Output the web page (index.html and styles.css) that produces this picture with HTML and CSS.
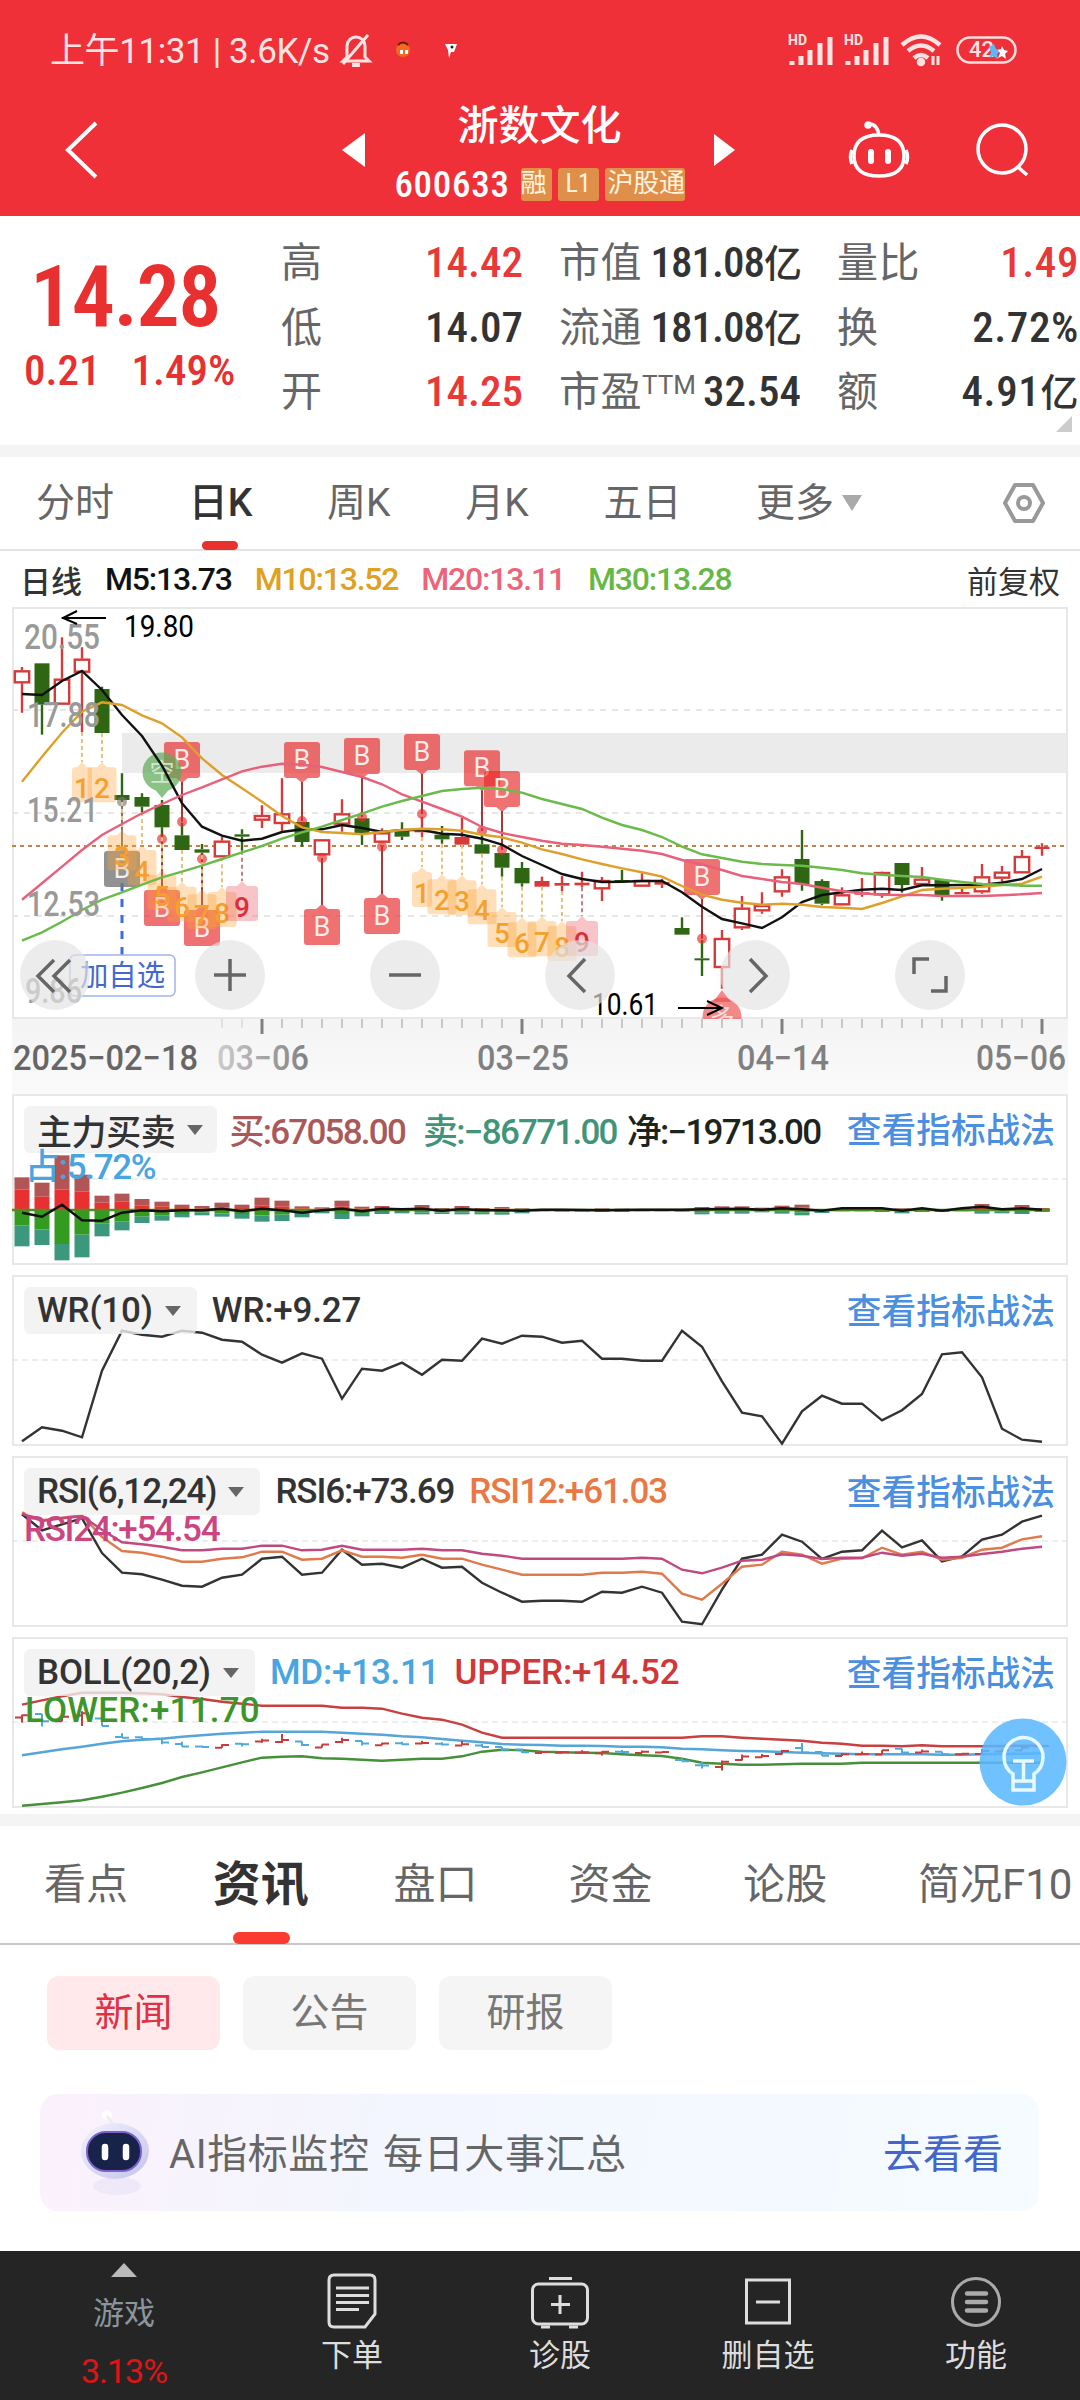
FILE: index.html
```html
<!DOCTYPE html>
<html lang="zh-CN">
<head>
<meta charset="utf-8"/>
<title>浙数文化 600633</title>
<link rel="stylesheet" href="styles.css">
</head>
<body>
<header class="top">
<div class="status">
<span class="status-text">上午11:31 | 3.6K/s</span>
<svg class="bell" width="34" height="36" viewBox="0 0 34 36" fill="none" stroke="#ffe3e3" stroke-width="3"><path d="M8 25V14a9 9 0 0 1 18 0v11l4 4H4z"/><path d="M29 3L4 32"/><path d="M13 33h8" stroke-width="4"/></svg>
<svg class="faces" width="70" height="20" viewBox="0 0 70 20"><circle cx="10" cy="10" r="7" fill="#f26a22"/><path d="M5 5q5-5 10 0" stroke="#6b1a08" stroke-width="2" fill="none"/><path d="M7 12h3M12 12h3" stroke="#fff" stroke-width="4"/><path d="M52 4h12l-3 8h-3l-2 6-1-8z" fill="#fff"/><circle cx="59" cy="7" r="1.5" fill="#222"/></svg>
<div class="status-right">
<svg width="48" height="34" viewBox="0 0 48 34"><text x="0" y="12" class="hd">HD</text><path d="M4 32v-4M13 32v-9M22 32V17M32 32V10M42 32V4" stroke="#ffe3e3" stroke-width="5"/></svg>
<svg width="48" height="34" viewBox="0 0 48 34"><text x="0" y="12" class="hd">HD</text><path d="M4 32v-4M13 32v-9M22 32V17M32 32V10M42 32V4" stroke="#ffe3e3" stroke-width="5"/></svg>
<svg width="44" height="34" viewBox="0 0 44 34" fill="none" stroke="#ffe3e3" stroke-width="4.5"><path d="M2 12q19-17 38 0M8 18q13-11 26 0M14 25q7-6 14 0"/><circle cx="21" cy="29" r="2"/><path d="M33 23v9M38 23v9" stroke-width="3"/></svg>
<svg class="battery" width="62" height="30" viewBox="0 0 62 30"><rect x="1.5" y="2.5" width="58" height="25" rx="12.500" fill="none" stroke="#ffdede" stroke-width="2.500"/><text x="13" y="22">42</text><path d="M38 9l2 5 5 1-4 4 1 5-5-3-4 2 2-6-2-5z" fill="#5bb8ff"/><path d="M46 11l2 4 4 1-3 3 1 5-4-3-4 2 2-5-2-3 3-1z" fill="#fff"/></svg>
</div>
</div>
<nav class="nav">
<svg class="back" width="40" height="60" viewBox="0 0 40 60" fill="none" stroke="#fff" stroke-width="4"><path d="M34 3L6 30l28 27"/></svg>
<svg class="prev" width="24" height="36" viewBox="0 0 24 36"><path d="M23 1v34L0 18z" fill="#fff"/></svg>
<div class="stock">
<div class="stock-name">浙数文化</div>
<div class="stock-sub"><span class="stock-code">600633</span><div class="tags"><span>融</span><span>L1</span><span>沪股通</span></div></div>
</div>
<svg class="next" width="24" height="36" viewBox="0 0 24 36"><path d="M1 2v32l21-16z" fill="#fff"/></svg>
<svg class="robot" width="64" height="58" viewBox="0 0 64 58" fill="none" stroke="#fff" stroke-width="3.500"><path d="M20 3q9-1 11 11"/><circle cx="20" cy="4" r="2" fill="#fff"/><path d="M31 14c17 0 25 7 25 21S47 55 31 55 6 49 6 35s8-21 25-21z"/><path d="M4 29q-3 7 0 14M58 29q3 7 0 14"/><path d="M23 31v9M40 31v9" stroke-width="6" stroke-linecap="round"/></svg>
<svg class="search" width="56" height="56" viewBox="0 0 56 56" fill="none" stroke="#fff" stroke-width="3.500"><circle cx="28" cy="27" r="24"/><path d="M44 45l9 8"/></svg>
</nav>
</header>

<section class="quote">
<div class="price">
<div class="price-now">14.28</div>
<div class="price-diff"><span>0.21</span><span>1.49%</span></div>
</div>
<div class="col col-a">
<p><label>高</label><b class="up">14.42</b></p>
<p><label>低</label><b>14.07</b></p>
<p><label>开</label><b class="up">14.25</b></p>
</div>
<div class="col col-b">
<p><label>市值</label><b>181.08<small>亿</small></b></p>
<p><label>流通</label><b>181.08<small>亿</small></b></p>
<p><label>市盈<sup>TTM</sup></label><b>32.54</b></p>
</div>
<div class="col col-c">
<p><label>量比</label><b class="up">1.49</b></p>
<p><label>换</label><b>2.72%</b></p>
<p><label>额</label><b>4.91<small>亿</small></b></p>
</div>
<i class="corner"></i>
</section>

<nav class="periods">
<span>分时</span><span class="on">日K</span><span>周K</span><span>月K</span><span>五日</span><span>更多<i class="caret"></i></span>
<svg width="44" height="44" viewBox="0 0 44 44" fill="none" stroke="#999" stroke-width="4"><path d="M13 4h18l10 18-10 18H13L3 22z" stroke-linejoin="round"/><circle cx="22" cy="22" r="6"/></svg>
</nav>

<div class="ma">
<span class="ma-k">日线</span><span class="m5">M5:13.73</span><span class="m10">M10:13.52</span><span class="m20">M20:13.11</span><span class="m30">M30:13.28</span><span class="ma-r">前复权</span>
</div>

<div class="kchart">
<svg id="kline" width="1056" height="412" viewBox="12 7 1056 412"></svg>
<div class="tools">
<button><svg viewBox="0 0 70 70"><path d="M34 20L18 36l16 16M50 20L34 36l16 16"/></svg></button>
<button><svg viewBox="0 0 70 70"><path d="M19 35h32M35 19v32"/></svg></button>
<button><svg viewBox="0 0 70 70"><path d="M19 35h32"/></svg></button>
<button><svg viewBox="0 0 70 70"><path d="M40 19L24 36l16 16"/></svg></button>
<button><svg viewBox="0 0 70 70"><path d="M30 19l16 17-16 16"/></svg></button>
<button><svg viewBox="0 0 70 70"><path d="M19 34V19h15M51 36v15H36"/></svg></button>
</div>
</div>
<svg id="axis" class="axis" width="1056" height="75" viewBox="12 1019 1056 75"></svg>

<div class="panel">
<svg id="force" class="plot" width="1056" height="171" viewBox="12 0 1056 171"></svg>
<div class="legend force-legend"><button>主力买卖<i></i></button><span class="buy">买:67058.00</span><span class="sell">卖:−86771.00</span><span class="net">净:−19713.00</span><a>查看指标战法</a></div>
<div class="legend2 zhan">占:5.72%</div>
</div>
<div class="panel">
<svg id="wr" class="plot" width="1056" height="171" viewBox="12 0 1056 171"></svg>
<div class="legend"><button>WR(10)<i></i></button><span>WR:+9.27</span><a>查看指标战法</a></div>
</div>
<div class="panel">
<svg id="rsi" class="plot" width="1056" height="171" viewBox="12 0 1056 171"></svg>
<div class="legend rsi-legend"><button>RSI(6,12,24)<i></i></button><span>RSI6:+73.69</span><span class="rsi12">RSI12:+61.03</span><a>查看指标战法</a></div>
<div class="legend2 rsi24">RSI24:+54.54</div>
</div>
<div class="panel">
<svg id="boll" class="plot" width="1056" height="171" viewBox="12 0 1056 171"></svg>
<div class="legend"><button>BOLL(20,2)<i></i></button><span class="md">MD:+13.11</span><span class="upper">UPPER:+14.52</span><a>查看指标战法</a></div>
<div class="legend2 lower">LOWER:+11.70</div>
<svg class="bulb" width="88" height="88" viewBox="0 0 88 88" fill="none" stroke="#e8f8ff" stroke-width="3.500"><circle cx="44" cy="44" r="43.500" fill="#5ab8ff" fill-opacity=".87" stroke="none"/><path d="M34 72V56q-9-6-9-17a19.500 19.500 0 0 1 39 0q0 11-9 17v16zM34 63h21M44.500 62V43M34 43h21"/></svg>
</div>

<nav class="tabs">
<span>看点</span><span class="on">资讯</span><span>盘口</span><span>资金</span><span>论股</span><span>简况F10</span>
</nav>
<div class="pills"><span class="on">新闻</span><span>公告</span><span>研报</span></div>
<div class="banner">
<svg width="72" height="90" viewBox="0 0 72 90"><defs><linearGradient id="g" x1="0" y1="0" x2="1" y2="1"><stop offset="0" stop-color="#f3f3ff"/><stop offset="1" stop-color="#c3c3ea"/></linearGradient></defs><ellipse cx="38" cy="78" rx="24" ry="9" fill="#d9d6ee" opacity=".35"/><circle cx="28" cy="7" r="5" fill="#fff"/><path d="M28 8l6 8" stroke="#eee" stroke-width="3"/><ellipse cx="36" cy="43" rx="34" ry="28" fill="url(#g)"/><rect x="8" y="24" width="54" height="39" rx="19" fill="#18234a" stroke="#7d5fd0" stroke-width="2"/><path d="M26 39v10M47 39v10" stroke="#fff" stroke-width="6.500" stroke-linecap="round"/></svg>
<span>AI指标监控 每日大事汇总</span><a>去看看</a>
</div>

<footer class="bar">
<div class="game"><i></i><span>游戏</span><em>3.13%</em></div>
<div><svg width="60" height="60" viewBox="0 0 60 60"><path d="M12 4h36q5 0 5 5v34L43 56H12q-5 0-5-5V9q0-5 5-5zM14 17h33M14 24.500h33M14 31.500h33M14 38.500h23"/></svg><span>下单</span></div>
<div><svg width="60" height="60" viewBox="0 0 60 60"><rect x="2.500" y="13" width="55" height="40" rx="6"/><path d="M19 7.500h23M30 24v19M21 33.500h19M11 56h9M39 56h9"/></svg><span>诊股</span></div>
<div><svg width="60" height="60" viewBox="0 0 60 60"><path d="M8.500 9h43v43h-43zM18 31h24"/></svg><span>删自选</span></div>
<div><svg width="60" height="60" viewBox="0 0 60 60" class="dim"><circle cx="30" cy="31" r="23.500"/><path d="M21 22.500h19M21 31h19M21 39.500h19" stroke-width="4.500" stroke-linecap="round"/></svg><span>功能</span></div>
</footer>
<script src="script.js"></script>
</body>
</html>
```
FILE: styles.css
```css
* { box-sizing: border-box; }
body {
    margin: 0;
    width: 1080px;
    height: 2400px;
    overflow: hidden;
    background: #fff;
    color: #333;
    font-family: "Roboto", "Noto Sans CJK SC", sans-serif;
    font-stretch: 85%;
    display: flex;
    flex-direction: column;
}
body > * { flex: none; }
p { margin: 0; }
i, em { font-style: normal; }
svg { display: block; flex: none; }
span, a, button, label, b { white-space: nowrap; }

/* header */
.top { height: 216px; background: #f03038; color: #fff; }
.status { height: 84px; padding: 16px 62px 0 50px; display: flex; align-items: center; }
.status-text { font-size: 35px; color: #ffe3e3; width: 289px; font-stretch: 100%; letter-spacing: -.4px; margin-top: -5px; }
.faces { margin-left: 20px; }
.status-right { margin-left: auto; display: flex; align-items: center; gap: 8px; }
.hd { font: 700 14px "Roboto", sans-serif; fill: #ffe3e3; }
.battery { margin-left: 4px; }
.battery text { font: 500 22px "Roboto", sans-serif; fill: #ffe3e3; }
.nav { height: 132px; display: flex; align-items: center; padding-left: 62px; }
.prev { margin-left: 240px; }
.stock { width: 347px; display: flex; flex-direction: column; align-items: center; }
.stock-name { font-size: 41px; font-weight: 500; line-height: 50px; margin-top: 2px; }
.stock-sub { display: flex; align-items: center; gap: 11px; margin-top: 16px; height: 34px; }
.stock-code { font-size: 37px; font-weight: 500; letter-spacing: .7px; }
.tags { display: flex; gap: 6px; width: 164px; height: 33px; overflow: hidden; }
.tags span { background: #e08f4a; color: #fff3dc; font-size: 26px; line-height: 31px; padding: 0 8px; border-radius: 3px; }
.tags span:first-child { padding: 0 5px 0 0; }
.tags span:last-child { padding: 0; flex: 1; text-align: right; letter-spacing: -.3px; }
.robot { margin-left: 111px; }
.search { margin-left: 62px; }

/* quote */
.quote { position: relative; height: 241px; display: flex; border-bottom: 12px solid #f4f4f4; padding-top: 14px; }
.price { width: 281px; padding-left: 24px; color: #e83030; }
.price-now { font-size: 86px; font-weight: 600; letter-spacing: -1.5px; line-height: 104px; margin: 15px 0 -2px 6px; }
.price-diff { display: flex; gap: 31px; font-size: 43px; font-weight: 500; letter-spacing: 0; line-height: 46px; }
.col p { display: flex; justify-content: space-between; height: 64.5px; line-height: 65px; }
.col label { font-size: 41px; color: #666; margin-top: 1px; letter-spacing: .5px; }
.col b { font-size: 43px; font-weight: 500; }
.col b.up { color: #e83838; }
.col small { font-size: 38px; }
.col-a { width: 242px; }
.col-b { width: 242px; margin-left: 36px; }
.col-b b { letter-spacing: -1px; }
.col-b p:last-child b { letter-spacing: 0; }
.col-c { width: 242px; margin-left: 36px; }
.col-c b { letter-spacing: .6px; }
sup { font-size: 26px; vertical-align: 12px; line-height: 0; font-stretch: 100%; letter-spacing: 0; }
.corner { position: absolute; right: 8px; bottom: 13px; border-left: 16px solid transparent; border-bottom: 16px solid #ccc; }

/* period tabs */
.periods { height: 94px; border-bottom: 2px solid #e3e3e3; display: flex; align-items: center; padding: 0 34px 0 36px; font-size: 39px; font-stretch: 100%; color: #666; }
.periods span { position: relative; margin-right: 74.7px; line-height: 94px; }
.periods .on { color: #333; font-weight: 500; }
.periods .on::after { content: ""; position: absolute; left: 13px; bottom: 0; width: 36px; height: 9px; border-radius: 5px; background: #e8302f; }
.periods svg { margin-left: auto; }
.caret { display: inline-block; border: 10px solid transparent; border-top: 16px solid #aaa; border-bottom: 0; margin: 0 0 5px 8px; }
.ma { height: 56px; display: flex; align-items: center; padding: 0 20px; font-size: 32px; font-weight: 500; font-stretch: 100%; letter-spacing: -1.2px; gap: 23px; }
.ma-k { font-size: 31px; letter-spacing: 0; }
.m5 { color: #111; }
.m10 { color: #e0a020; }
.m20 { color: #ee6378; }
.m30 { color: #66b845; }
.ma-r { margin-left: auto; font-size: 31px; font-weight: 400; letter-spacing: 0; }

/* main chart */
.kchart { position: relative; width: 1056px; height: 412px; margin-left: 12px; }
.tools { position: absolute; left: 8px; top: 333px; display: flex; gap: 105px; }
.tools button { width: 70px; height: 70px; padding: 0; border: 0; border-radius: 35px; background: rgba(227, 227, 227, .68); }
.tools svg { fill: none; stroke: #666; stroke-width: 3.5; }
.axis { margin-left: 12px; background: linear-gradient(to bottom, #f4f4f4, #fafafa); }
text { font-family: "Roboto", "Noto Sans CJK SC", sans-serif; font-stretch: 100%; }

/* indicator panels */
.panel { position: relative; width: 1056px; height: 171px; margin: 0 0 10px 12px; }
.plot { position: absolute; left: 0; top: 0; }
.legend { position: relative; display: flex; align-items: center; padding: 12px 13px 0 12px; height: 59px; font-size: 35px; font-stretch: 100%; font-weight: 500; letter-spacing: -.2px; gap: 15px; }
.force-legend { gap: 12px; letter-spacing: -1.75px; }
.rsi-legend { letter-spacing: -1.1px; }
.legend button { border: 0; border-radius: 6px; background: rgba(240, 240, 240, .8); height: 47px; padding: 0 16px 0 13px; font: inherit; font-stretch: inherit; letter-spacing: inherit; color: #333; display: flex; align-items: center; }
.force-legend button { letter-spacing: -.4px; padding-right: 14px; }
.force-legend span { margin-top: -3px; }
.legend button i { border: 8px solid transparent; border-top: 10px solid #666; border-bottom: 0; margin-left: 12px; }
.legend a { margin: -4px 0 0 auto; color: #4a8fe0; font-size: 34.7px; letter-spacing: 0; }
.legend2 { position: relative; font-size: 35px; font-stretch: 100%; font-weight: 500; line-height: 30px; margin: 0 0 0 13px; }
.buy { color: #a85a5a; }
.sell { color: #419478; margin-left: 6px; }
.net { color: #1c241c; margin-left: -2px; }
.zhan { color: #48a5e0; letter-spacing: -1.3px; }
.rsi12 { color: #ea7845; }
.rsi24 { color: #cc4580; letter-spacing: -1.3px; margin-left: 12px; }
.md { color: #48a5e0; }
.upper { color: #d03838; }
.lower { color: #3c952a; letter-spacing: .2px; }
.bulb { position: absolute; left: 967px; top: 81px; }

/* info tabs */
.tabs { height: 131px; margin-top: -4px; border-top: 12px solid #f4f4f4; border-bottom: 2px solid #c8c8c8; display: flex; align-items: center; padding: 0 0 0 44px; font-size: 42px; font-stretch: 100%; color: #666; }
.tabs span { position: relative; width: 174.8px; flex: none; line-height: 118px; }
.tabs .on { left: -6px; color: #333; font-size: 48px; font-weight: 700; }
.tabs .on::after { content: ""; position: absolute; left: 20px; bottom: 0; width: 57px; height: 12px; border-radius: 6px; background: #fb3b30; }
.pills { display: flex; gap: 23px; padding: 31px 47px 44px; }
.pills span { width: 173px; height: 74px; border-radius: 12px; background: #f5f5f5; color: #777; font-size: 39px; line-height: 74px; text-align: center; }
.pills .on { background: #ffe9ea; color: #e03045; }
.banner { height: 117px; margin: 0 41px 40px 40px; border-radius: 18px; background: linear-gradient(100deg, #fbf1fd, #f3f6fe 35%, #f4f8ff 70%, #f5fcff); display: flex; align-items: center; padding: 0 36px 0 39px; font-size: 40px; color: #666; }
.banner span { margin: -4px 0 0 18px; letter-spacing: .6px; word-spacing: 3px; font-stretch: 100%; }
.banner a { margin: -4px 0 0 auto; color: #4466cc; }

/* bottom bar */
.bar { height: 149px; background: #252525; display: flex; color: #ddd; font-size: 31px; }
.bar div { width: 208px; display: flex; flex-direction: column; align-items: center; padding-top: 20px; line-height: 46px; }
.bar svg { fill: none; stroke: #ddd; stroke-width: 3; margin-bottom: 2px; }
.bar svg.dim { stroke: #aaa; }
.bar .game { width: 248px; padding-top: 12px; color: #8b959c; }
.game i { border: 13px solid transparent; border-bottom: 14px solid #bbb; border-top: 0; margin-bottom: 14px; }
.game em { color: #e01414; margin-top: 11px; font-size: 34px; font-stretch: 100%; letter-spacing: -1px; }
```
FILE: script.js
```js
// candle: [high, body top, body bottom, low, type]  r = hollow, R = solid red, g = green
const candles = [
    [201,211,250,338,'r'],[190,190,314,404,'g'],[112,236,314,314,'r'],[142,176,218,396,'r'],[260,267,399,399,'g'],
    [520,585,600,606,'g'],[580,591,620,636,'g'],[600,615,682,712,'g'],[668,706,750,750,'g'],[732,748,758,766,'g'],
    [710,722,772,772,'r'],[688,703,710,752,'g'],[616,645,662,684,'r'],[535,640,672,692,'r'],[666,666,726,740,'g'],
    [718,718,766,766,'r'],[598,640,674,695,'r'],[655,655,700,735,'g'],[685,697,728,728,'r'],[667,693,710,720,'g'],
    [650,689,697,711,'R'],[678,704,718,731,'g'],[653,711,734,734,'R'],[705,733,761,761,'g'],[759,759,803,830,'g'],
    [786,804,850,860,'g'],[830,843,860,860,'R'],[828,849,857,873,'R'],[815,848,856,862,'R'],[831,840,868,903,'r'],
    [810,840,846,846,'g'],[820,840,860,860,'r'],[836,846,854,864,'R'],[952,984,1004,1004,'g'],[1020,1075,1080,1128,'g'],
    [990,1014,1104,1166,'r'],[888,923,985,990,'r'],[877,915,934,941,'r'],[808,829,877,890,'r'],[690,777,852,872,'g'],
    [838,843,911,916,'g'],[862,883,916,916,'r'],[834,877,884,890,'R'],[815,816,886,893,'r'],[789,789,855,878,'g'],
    [801,836,855,855,'r'],[840,840,885,902,'g'],[862,876,883,883,'R'],[792,829,877,881,'r'],[798,815,836,846,'r'],
    [750,768,820,820,'r'],[730,740,747,767,'R']
];
const ma = {
    '#111': [282,285,243,213,270,345,408,497,610,680,707,722,716,696,688,688,675,684,696,690,690,701,704,716,734,768,795,822,837,846,845,843,843,877,920,957,970,984,952,906,885,877,869,866,870,856,856,855,854,848,837,807],
    '#dfa02a': [545,470,398,335,307,315,346,370,412,475,525,565,605,648,682,696,699,703,696,690,686,688,692,704,712,728,748,762,778,792,805,817,830,858,884,899,908,914,911,914,921,923,927,909,889,870,866,863,860,855,851,830],
    '#e8607a': [899,850,800,750,705,672,640,612,585,562,538,514,500,491,494,501,516,531,553,583,605,627,650,681,699,711,722,731,735,740,746,752,762,780,793,810,828,837,846,852,863,874,880,884,885,885,888,888,888,886,883,879],
    '#6bbb4a': [1022,997,965,930,899,877,854,832,815,797,777,757,738,716,697,680,660,641,620,603,588,573,567,563,567,578,597,612,627,653,675,690,711,740,763,774,785,792,795,797,803,810,820,824,828,831,839,846,852,854,857,857]
};
const X = i => 22 + 20 * i;

function line(data, color, top, w = 2.4) {
    const pts = data.map((v, i) => X(i) + ',' + ((v - top) / 3).toFixed(1)).join(' ');
    return `<polyline points="${pts}" fill="none" stroke="${color}" stroke-width="${w}"/>`;
}
function label(s, x, y, len, size, color, weight = 400) {
    return `<text x="${x}" y="${y}" textLength="${len}" lengthAdjust="spacingAndGlyphs" font-size="${size}" font-weight="${weight}" fill="${color}">${s}</text>`;
}

function drawKline() {
    let s = '<rect x="122" y="133" width="946" height="40" fill="#ebebeb"/>';
    s += '<rect x="13" y="8" width="1054" height="410" fill="none" stroke="#e8e8e8" stroke-width="2"/>';
    [110, 213, 316].forEach(y => s += `<path d="M12 ${y}H1066" stroke="#e6e6e6" stroke-width="2" stroke-dasharray="6 6"/>`);
    s += '<path d="M12 246H1066" stroke="#c08448" stroke-width="2" stroke-dasharray="4 4"/>';

    // 加自选
    s += '<path d="M122 283V356" stroke="#3f6be0" stroke-width="3" stroke-dasharray="8 8"/>';
    s += '<rect x="70" y="355" width="105" height="41" rx="5" fill="#fff" stroke="#9fb4ea" stroke-width="1.5"/>';
    s += label('加自选', 80, 386, 85, 29, '#4468d0');

    candles.forEach((c, i) => {
        const [h, t, b, l] = c.slice(0, 4).map(v => v / 3), x = X(i);
        const color = c[4] === 'g' ? '#2f6613' : '#d63a3a';
        s += `<path d="M${x} ${h}V${t}M${x} ${b}V${l}" stroke="${color}" stroke-width="2.4"/>`;
        if (c[4] === 'r') s += `<rect x="${x - 7.2}" y="${t + 1}" width="14.4" height="${Math.max(b - t - 2, 2)}" fill="#fff" stroke="${color}" stroke-width="2.4"/>`;
        else s += `<rect x="${x - 7.5}" y="${t}" width="15" height="${Math.max(b - t, 2)}" fill="${color}"/>`;
    });

    // B markers: [index, box top, dot, grey]
    [[8,426,665],[14,426,663],[17,414,651],[20,402,642],[23,451,693],[24,513,750],[34,777,1016],
     [5,753,605,1],[7,870,717],[9,930,777],[15,927,774],[18,894,740]].forEach(([i, top, dot, grey]) => {
        const x = X(i), y = top / 3, d = dot / 3, down = dot > top;
        const c = grey ? '#777' : '#e62828';
        const tip = down ? `M${x - 6} ${y + 36}h12l-6 5z` : `M${x - 6} ${y}h12l-6 -5z`;
        s += `<path d="M${x} ${d}V${down ? y + 40 : y - 4}" stroke="${grey ? '#777' : '#a83838'}" stroke-width="2"/>`;
        s += `<g fill="${c}" fill-opacity=".64"><circle cx="${x}" cy="${d}" r="5"/><path d="${tip}"/><rect x="${x - 18}" y="${y}" width="36" height="36" rx="3" fill-opacity="${grey ? .8 : .66}"/></g>`;
        s += `<text x="${x}" y="${y + 27}" text-anchor="middle" font-size="27" fill="#fff" fill-opacity=".88">B</text>`;
    });

    s += '<g fill="#5fab57" opacity=".72"><circle cx="162" cy="172" r="19.5"/><path d="M153 187h18l-9 11z"/></g><text x="162" y="181" text-anchor="middle" font-size="25" fill="#dff0dc" fill-opacity=".85">空</text>';
    s += '<g fill="#ee4a4a" fill-opacity=".65"><circle cx="722" cy="417" r="19.5"/><path d="M713 402h18l-9 -12z"/></g><text x="722" y="426" text-anchor="middle" font-size="25" fill="#fff" fill-opacity=".7">多</text>';

    // nine-turn counters
    [[3,1,502],[4,2,502],[5,3,706],[6,4,750],[7,5,825],[8,6,860],[9,7,883],[10,8,876],[11,9,858],
     [20,1,816],[21,2,838],[22,3,841],[23,4,868],[24,5,936],[25,6,967],[26,7,964],[27,8,978],[28,9,963]].forEach(([i, n, top]) => {
        const x = X(i), y = top / 3, w = n === 1 ? 20 : n === 9 ? 32 : 29, c = n === 9 ? '#ea5560' : '#fba43a';
        s += `<path d="M${x} ${candles[i][3] / 3}V${y - 5}" stroke="${n === 9 ? '#c88080' : '#e8c27c'}" stroke-width="2" stroke-dasharray="4 3"/>`;
        s += `<path d="M${x - w / 2 + 3} ${y}h${w / 2 - 8}l5 -5l5 5h${w / 2 - 8}q3 0 3 3v29q0 3 -3 3h${6 - w}q-3 0 -3 -3v-29q0 -3 3 -3z" fill="${c}" fill-opacity=".35"/>`;
        s += `<text x="${x}" y="${y + 30.5}" text-anchor="middle" font-size="28" font-weight="500" fill="${n === 9 ? '#d8303a' : '#f5a02a'}">${n}</text>`;
    });

    for (const color in ma) s += line(ma[color], color, 0);

    [['20.55', 24, 49, 76], ['17.88', 27, 127, 73], ['15.21', 27, 222, 71], ['12.53', 27, 316, 73], ['9.86', 25, 403, 57]]
        .forEach(([t, x, y, w]) => s += label(t, x, y, w, 35, '#999', 500));
    s += label('19.80', 124, 37, 70, 31, '#000') + label('10.61', 592, 415, 66, 31, '#000');
    s += '<path d="M106 18H62M77 11L63 18l14 6M678 408h44M707 401l15 7-15 7" fill="none" stroke="#000" stroke-width="2"/>';
    document.getElementById('kline').innerHTML = s;
}

function drawAxis() {
    let s = '<defs><linearGradient id="fade"><stop offset="0" stop-color="#ccc"/><stop offset="1" stop-color="#808080"/></linearGradient></defs>';
    for (let i = 10; i < 52; i++) {
        const big = (i - 12) % 13 === 0;
        s += `<path d="M${X(i)} 1019v${big ? 15 : 9}" stroke="${big ? '#808080' : i < 12 ? '#ccc' : '#999'}" stroke-width="${big ? 3 : 1}"/>`;
    }
    s += label('2025−02−18', 13, 1070, 185, 35, '#666', 500);
    s += label('03−06', 217, 1070, 92, 35, 'url(#fade)', 500);
    s += label('03−25', 477, 1070, 92, 35, '#808080', 500);
    s += label('04−14', 737, 1070, 92, 35, '#808080', 500);
    s += label('05−06', 976, 1070, 90, 35, '#808080', 500);
    document.getElementById('axis').innerHTML = s;
}

const frame = '<rect x="13" y="1" width="1054" height="169" fill="none" stroke="#e8e8e8" stroke-width="2"/><path d="M12 85H1066" stroke="#ddd" stroke-dasharray="6 4"/>';

function drawForce() {
    // [outer top, inner top, inner bottom, outer bottom]
    const bars = [[278,315,423,485],[294,336,434,481],[212,315,478,527],[270,320,450,518],[333,354,417,455],[327,350,411,437],[343,362,396,415],[351,365,393,408],[360,370,388,398],[364,371,384,392],[354,368,386,396],[360,370,388,402],[339,362,392,411],[348,365,390,409],[365,371,388,398],[368,372,382,386],[348,365,388,403],[366,371,385,395],[364,370,382,388],[371,373,382,386],[361,370,383,389],[370,373,383,388],[364,370,383,389],[370,373,384,389],[367,372,384,390],[371,373,381,386]];
    const small = [[373,380],[374,381],[374,381],[371,382],[372,382],[374,380],[374,380],[374,381],[367,389],[365,387],[365,387],[369,383],[363,387],[360,392],[373,385],[371,380],[371,380],[370,382],[371,386],[371,382],[374,382],[371,380],[358,387],[372,386],[361,388],[370,382]];
    small.forEach(([a, b]) => bars.push([a, (a + 376) / 2, (b + 376) / 2, b]));
    const net = [384,396,360,407,408,384,377,380,377,377,372,380,372,377,384,377,372,380,372,374,372,378,373,377,377,378,375,375,376,377,376,375,375,375,374,373,372,375,371,374,378,371,371,371,378,371,378,371,366,374,371,375];
    const y = v => (v - 28) / 3;
    let s = frame;
    bars.forEach((b, i) => {
        const x = X(i) - 7.5;
        [[b[0], b[1], '#b25555'], [b[1], 375, '#e83030'], [375, b[2], '#339c20'], [b[2], b[3], '#3b987c']].forEach(([t, e, c]) =>
            s += `<rect x="${x}" y="${y(t)}" width="15" height="${Math.max(0, (e - t) / 3)}" fill="${c}"/>`);
    });
    s += `<path d="M12 ${y(376)}H1050" stroke="#4f8c22" stroke-width="2.5"/>`;
    s += line(net, '#111', 28);
    document.getElementById('force').innerHTML = s;
}

function drawWr() {
    document.getElementById('wr').innerHTML = frame + line([1070,1028,1038,1058,858,738,750,756,738,744,765,771,810,834,806,822,942,852,858,834,870,825,828,762,777,753,756,774,768,822,822,828,828,738,786,890,984,995,1077,980,933,957,957,1007,977,928,809,803,878,1032,1065,1071], '#333', 571);
}

function drawRsi() {
    let s = frame;
    s += line([194,242,224,206,310,369,374,390,408,411,384,375,327,321,375,369,300,345,342,354,327,354,351,399,429,456,453,453,456,426,429,411,429,516,524,420,327,315,255,276,328,306,302,243,293,272,335,320,270,255,216,198], '#333', 19);
    s += line([188,212,204,197,262,304,309,321,336,336,327,323,306,306,330,327,302,321,321,324,315,327,327,345,360,375,375,375,375,369,369,366,372,432,450,402,351,345,306,315,342,327,326,294,315,306,330,324,300,294,269,260], '#e07a4c', 19);
    s += line([192,214,206,200,240,278,284,291,302,302,297,297,288,288,302,300,288,300,300,300,297,302,302,312,318,327,327,327,327,327,327,324,327,360,371,354,333,330,314,318,328,324,324,309,318,312,324,321,313,306,297,291], '#c04a80', 19);
    document.getElementById('rsi').innerHTML = s;
}

function drawBoll() {
    let s = frame;
    const y = v => ((760 + v * .174 - 562) / 3).toFixed(1);
    s += line([765,752,740,729,729,729,731,734,742,748,756,762,768,768,768,768,774,774,777,792,804,810,825,849,864,864,864,864,864,864,864,864,864,864,860,860,864,867,870,873,879,882,888,888,890,887,890,890,890,889,888,888], '#c94040', 562);
    s += line([917,908,899,891,882,875,870,867,861,857,852,849,846,846,846,846,849,852,855,860,863,868,873,878,883,885,886,888,888,889,891,891,893,897,899,902,904,905,907,909,911,912,914,914,914,914,915,915,914,913,912,911], '#55a5d8', 562);
    s += line([1068,1063,1058,1052,1041,1029,1015,1000,982,968,953,938,924,921,920,926,927,930,933,930,927,927,920,906,900,902,906,908,909,910,914,917,919,927,939,942,945,945,944,942,942,942,939,939,939,939,939,939,939,939,939,939], '#47903a', 562);
    candles.forEach(([h, t, b, l, type], i) => {
        const up = type !== 'g', x = X(i);
        s += `<path d="M${x} ${y(h)}V${y(l)}M${x - 7} ${y(up ? b : t)}H${x}M${x} ${y(up ? t : b)}h7" stroke="${up ? '#c93c3c' : '#4fa9dc'}" stroke-width="2"/>`;
    });
    document.getElementById('boll').innerHTML = s;
}

drawKline();
drawAxis();
drawForce();
drawWr();
drawRsi();
drawBoll();
```
